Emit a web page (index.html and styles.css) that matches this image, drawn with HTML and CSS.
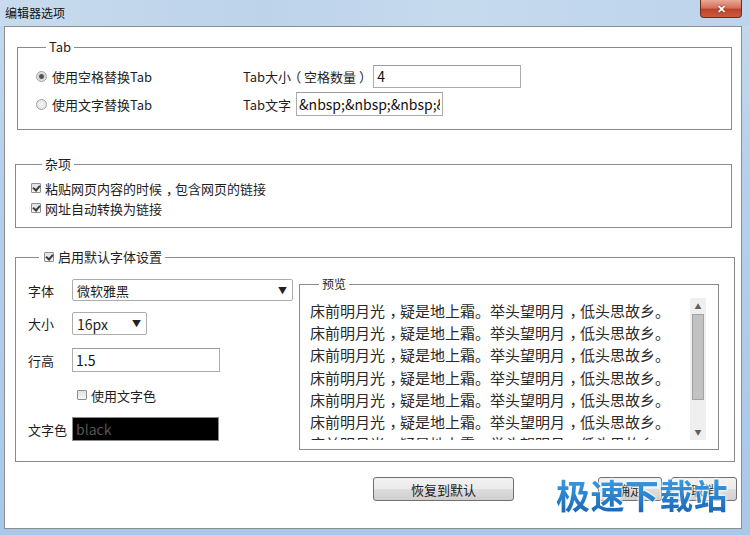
FILE: index.html
```html
<!DOCTYPE html>
<html lang="zh-CN">
<head>
    <meta charset="UTF-8">
    <title>编辑器选项</title>
    <link rel="stylesheet" href="styles.css">
</head>
<body>
<div class="window">
    <div class="titlebar">
        <span class="title">编辑器选项</span>
        <span class="close">✕</span>
    </div>

    <div class="client">
        <!-- Tab -->
        <fieldset class="group group-tab">
            <legend>Tab</legend>
            <div class="tab-row">
                <label class="opt"><input type="radio" name="tab" checked> 使用空格替换Tab</label>
                <span class="lbl">Tab大小<span class="po">（</span>空格数量<span class="pcl">）</span></span>
                <input class="field field-size" type="text" value="4">
            </div>
            <div class="tab-row">
                <label class="opt"><input type="radio" name="tab"> 使用文字替换Tab</label>
                <span class="lbl">Tab文字</span>
                <input class="field field-text" type="text" value="&amp;nbsp;&amp;nbsp;&amp;nbsp;&amp;nbsp;">
            </div>
        </fieldset>

        <!-- 杂项 -->
        <fieldset class="group group-misc">
            <legend>杂项</legend>
            <label class="chk-row"><input type="checkbox" checked>粘贴网页内容的时候<span class="pc">，</span>包含网页的链接</label>
            <label class="chk-row"><input type="checkbox" checked>网址自动转换为链接</label>
        </fieldset>

        <!-- 字体 -->
        <fieldset class="group group-font">
            <legend class="legend-chk"><label><input type="checkbox" checked>启用默认字体设置</label></legend>
            <div class="font-body">
                <div class="font-form">
                    <div class="form-row row-family">
                        <span class="form-lbl">字体</span>
                        <div class="select select-family"><span>微软雅黑</span><span class="arrow">▼</span></div>
                    </div>
                    <div class="form-row row-size">
                        <span class="form-lbl">大小</span>
                        <div class="select select-size"><span>16px</span><span class="arrow">▼</span></div>
                    </div>
                    <div class="form-row row-height">
                        <span class="form-lbl">行高</span>
                        <input class="field field-lh" type="text" value="1.5">
                    </div>
                    <div class="form-row row-usecolor">
                        <label class="chk-inline"><input type="checkbox">使用文字色</label>
                    </div>
                    <div class="form-row row-color">
                        <span class="form-lbl">文字色</span>
                        <input class="field field-color" type="text" value="black">
                    </div>
                </div>

                <fieldset class="preview">
                    <legend>预览</legend>
                    <div class="preview-box">
                        <div class="preview-text">
                            <p>床前明月光<span class="pc">，</span>疑是地上霜。举头望明月<span class="pc">，</span>低头思故乡。</p>
                            <p>床前明月光<span class="pc">，</span>疑是地上霜。举头望明月<span class="pc">，</span>低头思故乡。</p>
                            <p>床前明月光<span class="pc">，</span>疑是地上霜。举头望明月<span class="pc">，</span>低头思故乡。</p>
                            <p>床前明月光<span class="pc">，</span>疑是地上霜。举头望明月<span class="pc">，</span>低头思故乡。</p>
                            <p>床前明月光<span class="pc">，</span>疑是地上霜。举头望明月<span class="pc">，</span>低头思故乡。</p>
                            <p>床前明月光<span class="pc">，</span>疑是地上霜。举头望明月<span class="pc">，</span>低头思故乡。</p>
                            <p>床前明月光<span class="pc">，</span>疑是地上霜。举头望明月<span class="pc">，</span>低头思故乡。</p>
                        </div>
                        <div class="vbar">
                            <span class="vbar-btn">▲</span>
                            <span class="vbar-thumb"></span>
                            <span class="vbar-space"></span>
                            <span class="vbar-btn">▼</span>
                        </div>
                    </div>
                </fieldset>
            </div>
        </fieldset>

        <div class="buttons">
            <button class="btn btn-reset">恢复到默认</button>
            <button class="btn btn-ok">确定</button>
            <button class="btn btn-cancel">取消</button>
        </div>
    </div>

    <div class="watermark">极速下载站</div>
</div>
</body>
</html>
```

FILE: styles.css
```css
* {
    box-sizing: border-box;
}

body {
    margin: 0;
    width: 750px;
    height: 535px;
    overflow: hidden;
    font-family: "Noto Sans CJK SC", "Liberation Sans", sans-serif;
    font-size: 13px;
    color: #1e1e1e;
}

/* full-width punctuation sits centred in the original UI font */
.pc,
.po,
.pcl {
    position: relative;
}

.pc {
    left: 0.3em;
}

.po {
    left: -0.22em;
}

.pcl {
    left: 0.22em;
}

.window {
    position: relative;
    width: 750px;
    height: 535px;
    background: linear-gradient(180deg, #c4d9ee 0%, #b3cfeb 40%, #a9c8e8 100%);
}

.titlebar {
    position: relative;
    height: 26px;
    background: linear-gradient(90deg, #c8dbee 0%, #bcd3ea 35%, #c6daee 60%, #bcd4ec 100%);
}

.title {
    display: block;
    padding-left: 5px;
    line-height: 26px;
    font-size: 12px;
    color: #111;
}

.close {
    position: absolute;
    top: 0;
    right: 8px;
    width: 42px;
    height: 18px;
    border: 1px solid #6e2a1e;
    border-top: none;
    border-radius: 0 0 4px 4px;
    background: linear-gradient(180deg, #e9a897 0%, #d4735c 45%, #c0432b 55%, #c95c40 100%);
    color: #fff;
    font-size: 11px;
    font-weight: bold;
    text-align: center;
    line-height: 17px;
    text-shadow: 0 0 2px #5a1a10;
}

.client {
    position: relative;
    height: 503px;
    margin: 0 8px 0 4px;
    padding: 0 0 0 10px;
    background: #fff;
    border: 1px solid #8d8d8d;
}

/* group boxes */
.group {
    margin: 0;
    padding: 0;
    border: 1px solid #8a8a8a;
    box-shadow: inset 1px 1px 0 #fff;
}

.group legend,
.preview legend {
    margin-left: 11px;
    padding: 0 3px;
    line-height: 16px;
    font-size: 13px;
}

.group-tab {
    width: 715px;
    height: 91px;
    margin: 12px 0 0 2px;
    padding: 9px 0 0 17px;
}

.tab-row {
    display: flex;
    align-items: center;
    height: 24px;
    margin-bottom: 4px;
}

.opt {
    display: flex;
    align-items: center;
    width: 208px;
}

.lbl {
    margin-right: 4px;
}

.field {
    height: 24px;
    padding: 0 3px;
    border: 1px solid #acacac;
    border-top-color: #9c9c9c;
    font-family: "Noto Sans CJK SC", "Liberation Sans", sans-serif;
    font-size: 14px;
    color: #111;
    background: #fff;
    outline: none;
}

.field-size {
    width: 148px;
    height: 23px;
}

.field-text {
    width: 147px;
    margin-left: 1px;
    padding: 0 2px;
}

input[type="radio"] {
    appearance: none;
    width: 11px;
    height: 11px;
    margin: 0 5px 0 1px;
    border: 1px solid #a2a2a2;
    border-radius: 50%;
    background: radial-gradient(circle, #f6f6f6 0, #dedede 100%);
}

input[type="radio"]:checked {
    background: radial-gradient(circle, #4b4b4b 0, #5a5a5a 2px, #d8d8d8 3px, #f2f2f2 100%);
}

input[type="checkbox"] {
    appearance: none;
    position: relative;
    width: 10px;
    height: 10px;
    margin: 0 4px 0 0;
    border: 1px solid #8f8f8f;
    border-radius: 1px;
    background: linear-gradient(180deg, #e2e2e2, #f4f4f4);
    flex: none;
}

input[type="checkbox"]:checked::after {
    content: "";
    position: absolute;
    left: 2px;
    top: 0;
    width: 3px;
    height: 5px;
    border: solid #3a3a3a;
    border-width: 0 2px 2px 0;
    transform: rotate(40deg);
}

.group-misc {
    width: 717px;
    height: 72px;
    margin-top: 26px;
    padding: 6px 0 0 15px;
}

.chk-row {
    display: flex;
    align-items: center;
    height: 20px;
}

.group-font {
    width: 720px;
    height: 213px;
    margin-top: 21px;
    padding: 11px 0 0 12px;
}

.legend-chk label {
    display: flex;
    align-items: center;
}

.legend-chk input[type="checkbox"] {
    margin-left: 2px;
}

.font-body {
    display: flex;
    align-items: flex-start;
}

.font-form {
    width: 271px;
    padding-top: 3px;
}

.form-row {
    display: flex;
    align-items: center;
}

.form-lbl {
    width: 44px;
}

.row-family {
    height: 22px;
}

.row-size {
    height: 23px;
    margin-top: 11px;
}

.row-height {
    height: 24px;
    margin-top: 13px;
}

.row-usecolor {
    height: 20px;
    margin-top: 13px;
    padding-left: 49px;
}

.chk-inline {
    display: flex;
    align-items: center;
}

.row-color {
    height: 24px;
    margin-top: 12px;
}

.select {
    display: flex;
    align-items: center;
    justify-content: space-between;
    height: 100%;
    padding: 0 5px 0 4px;
    border: 1px solid #acacac;
    border-radius: 2px;
    background: #fff;
    font-size: 14px;
}

.select-family {
    width: 221px;
    font-size: 13px;
}

.select-size {
    width: 75px;
}

.arrow {
    font-size: 9px;
    color: #222;
}

.field-lh {
    width: 148px;
}

.field-color {
    width: 147px;
    background: #000;
    color: #555;
    border-color: #8c8c8c;
}

/* preview */
.preview {
    width: 420px;
    height: 174px;
    margin: 0;
    padding: 6px 12px 0 10px;
    border: 1px solid #8a8a8a;
}

.preview legend {
    margin-left: 9px;
    font-size: 12px;
}

.preview-box {
    display: flex;
    height: 142px;
}

.preview-text {
    flex: 1;
    overflow: hidden;
    padding-top: 2px;
    font-size: 15px;
    line-height: 22.2px;
    color: #2a2a2a;
}

.preview-text p {
    margin: 0;
    white-space: nowrap;
}

.vbar {
    display: flex;
    flex-direction: column;
    align-items: center;
    width: 16px;
    background: #efefef;
}

.vbar-btn {
    height: 16px;
    font-size: 7px;
    line-height: 16px;
    color: #606060;
}

.vbar-thumb {
    width: 12px;
    height: 86px;
    border: 1px solid #a3a3a3;
    background: #c2c2c2;
}

.vbar-space {
    flex: 1;
}

/* buttons */
.buttons {
    display: flex;
    margin-top: 15px;
}

.btn {
    height: 24px;
    padding: 0;
    border: 1px solid #707070;
    border-radius: 3px;
    background: linear-gradient(180deg, #f2f2f2 0%, #ebebeb 50%, #dddddd 51%, #cfcfcf 100%);
    font-family: "Noto Sans CJK SC", sans-serif;
    font-size: 13px;
    color: #222;
}

.btn-reset {
    width: 141px;
    margin-left: 358px;
}

.btn-ok {
    width: 64px;
    margin-left: 84px;
}

.btn-cancel {
    width: 66px;
    margin-left: 9px;
}

.watermark {
    position: absolute;
    left: 556px;
    top: 473px;
    font-size: 34px;
    font-weight: bold;
    line-height: 44px;
    letter-spacing: 0.4px;
    background: linear-gradient(180deg, #3fa2e6 0%, #2a84d0 50%, #1a5fae 100%);
    -webkit-background-clip: text;
    background-clip: text;
    color: transparent;
    filter: drop-shadow(0 0 1px #fff) drop-shadow(0 0 1px #fff);
}
```
